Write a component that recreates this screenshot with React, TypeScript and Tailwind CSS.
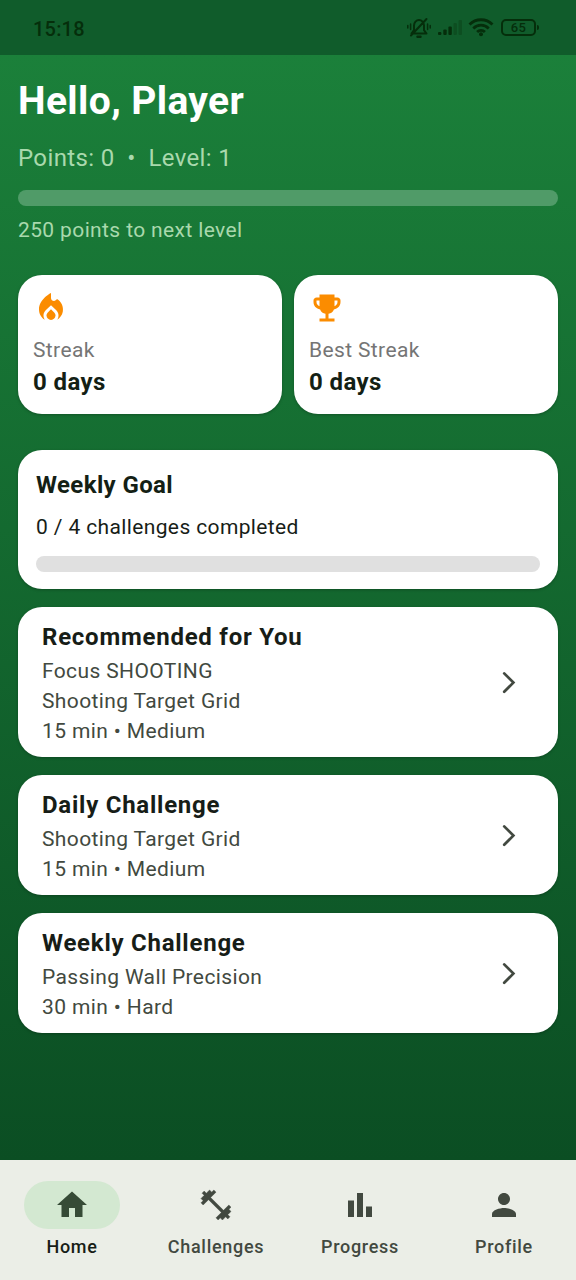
import type { ReactNode } from "react";
import {
  MdBarChart,
  MdEmojiEvents,
  MdHome,
  MdLocalFireDepartment,
  MdPerson,
} from "react-icons/md";

function BellOffIcon() {
  return (
    <svg width="26" height="24" viewBox="0 0 26 24" fill="none" stroke="currentColor" strokeWidth="2" strokeLinecap="round" strokeLinejoin="round">
      <path d="M5.5 17.5h15L18 14.2V9.5a5 5.5 0 0 0-10 0v4.7l-2.5 3.3M5 19.5 20.5 3" />
      <path d="M11.5 20.8h3" strokeWidth="2.4" />
      <path d="M4.6 8v5.5M1.8 9.5v2.5M21.6 8v5.5M24.2 9.5v2.5" strokeWidth="1.5" />
    </svg>
  );
}

function SignalIcon() {
  return (
    <svg width="25" height="17" viewBox="0 0 25 17" fill="currentColor">
      <rect x="0" y="13" width="3.4" height="3" rx="1" />
      <rect x="5.3" y="10.5" width="3.4" height="5.5" rx="1" />
      <rect x="10.4" y="7.5" width="3.4" height="8.5" rx="1" />
      <rect x="15.5" y="4" width="3.4" height="12" rx="1" opacity=".3" />
      <rect x="20.6" y="1" width="3.4" height="15" rx="1" opacity=".3" />
    </svg>
  );
}

function WifiIcon() {
  return (
    <svg width="26" height="19" viewBox="0 0 26 19" fill="none" stroke="currentColor" strokeWidth="2.8">
      <path d="M1.5 6.5a16.3 16.3 0 0 1 23 0M5.3 10.4a10.9 10.9 0 0 1 15.4 0M9.1 14a5.5 5.5 0 0 1 7.8 0" />
      <circle cx="13" cy="16.2" r="2" fill="currentColor" stroke="none" />
    </svg>
  );
}

function DumbbellIcon({ size }: { size: number }) {
  return (
    <svg width={size} height={size} viewBox="0 0 24 24" fill="currentColor" stroke="currentColor" strokeWidth="0.3" strokeLinejoin="round">
      <path d="M20.57 14.86 22 13.43 20.57 12 17 15.57 8.43 7 12 3.43 10.57 2 9.14 3.43 7.71 2 5.57 4.14 4.14 2.71 2.71 4.14l1.43 1.43L2 7.71l1.43 1.43L2 10.57 3.43 12 7 8.43 15.57 17 12 20.57 13.43 22l1.43-1.43L16.29 22l2.14-2.14 1.43 1.43 1.43-1.43-1.43-1.43L22 16.29z" />
    </svg>
  );
}

function StatusBar() {
  return (
    <header className="flex h-[55px] shrink-0 items-center justify-between bg-[#105c2b] pl-[33px] pr-[37px] text-[#052e0b]">
      <span className="pt-[2px] text-[20px] font-medium tracking-[0.2px]">15:18</span>
      <div className="flex items-center">
        <BellOffIcon />
        <span className="ml-[6px]"><SignalIcon /></span>
        <span className="ml-[5px]"><WifiIcon /></span>
        <div className="ml-[7px] flex h-[17px] w-[35px] items-center justify-center rounded-[5px] border-2 border-[#052e0b] text-[13px] font-medium leading-none tracking-[0.3px]">65</div>
        <div className="ml-[1px] h-[5px] w-[2px] rounded-r-full bg-[#052e0b]" />
      </div>
    </header>
  );
}

function StatCard({ icon, label }: { icon: ReactNode; label: string }) {
  return (
    <div className="h-[139px] flex-1 rounded-[24px] bg-white px-[15px] pt-[15px] shadow-[0_1px_3px_rgba(0,0,0,0.25)]">
      <div className="text-[36px] text-[#fb8c00]">{icon}</div>
      <div className="mt-[9px] text-[21px] leading-[30px] tracking-[0.375px] text-[#757575]">{label}</div>
      <div className="mt-[2px] text-[24px] font-bold leading-[30px] tracking-[0.4px] text-[#141f15]">0 days</div>
    </div>
  );
}

function ChallengeCard({ title, lines }: { title: string; lines: string[] }) {
  return (
    <section className="mt-[18px] flex items-center justify-between rounded-[24px] bg-white pb-[11px] pl-[24px] pr-[36px] pt-[13px] shadow-[0_1px_3px_rgba(0,0,0,0.25)]">
      <div>
        <h2 className="mb-[1px] text-[24px] font-bold leading-[35px] tracking-[0.75px] text-[#171d17]">{title}</h2>
        {lines.map((line) => (
          <p key={line} className="text-[21px] leading-[30px] tracking-[0.375px] text-[#424940]">{line}</p>
        ))}
      </div>
      <svg width="26" height="26" viewBox="0 0 26 26" fill="none" stroke="#424940" strokeWidth="2.7">
        <path d="m8.2 3.4 9.2 9.2-9.2 9.2" strokeLinecap="round" />
      </svg>
    </section>
  );
}

const tabs = [
  { label: "Home", Icon: MdHome },
  { label: "Challenges", Icon: DumbbellIcon },
  { label: "Progress", Icon: MdBarChart },
  { label: "Profile", Icon: MdPerson },
];

export default function App() {
  return (
    <div className="flex h-[1280px] w-[576px] flex-col bg-[#ebeee7] font-[Roboto,sans-serif]">
      <StatusBar />
      <main className="flex-1 bg-linear-to-b from-[#1b803a] to-[#0b4e23] px-[18px] pt-[19px]">
        <h1 className="text-[39px] font-bold leading-[54px] tracking-[0.375px] text-white">Hello, Player</h1>
        <p className="mt-[12px] whitespace-pre text-[24px] leading-[36px] tracking-[0.375px] text-[#a9d9ad]">{"Points: 0  •  Level: 1"}</p>
        <div className="mt-[14px] h-[16px] rounded-full bg-[#509b68]" />
        <p className="mt-[9px] text-[21px] leading-[30px] tracking-[0.375px] text-[#a9d9ad]">250 points to next level</p>
        <div className="mt-[30px] flex gap-[12px]">
          <StatCard icon={<MdLocalFireDepartment />} label="Streak" />
          <StatCard icon={<MdEmojiEvents />} label="Best Streak" />
        </div>
        <section className="mt-[36px] h-[139px] rounded-[24px] bg-white px-[18px] pt-[18px] shadow-[0_1px_3px_rgba(0,0,0,0.25)]">
          <h2 className="text-[24px] font-bold leading-[35px] tracking-[0.375px] text-[#141f15]">Weekly Goal</h2>
          <p className="mt-[9px] text-[21px] leading-[30px] tracking-[0.375px] text-[#171d17]">0 / 4 challenges completed</p>
          <div className="mt-[14px] h-[16px] rounded-full bg-[#e0e0e0]" />
        </section>
        <ChallengeCard title="Recommended for You" lines={["Focus SHOOTING", "Shooting Target Grid", "15 min • Medium"]} />
        <ChallengeCard title="Daily Challenge" lines={["Shooting Target Grid", "15 min • Medium"]} />
        <ChallengeCard title="Weekly Challenge" lines={["Passing Wall Precision", "30 min • Hard"]} />
      </main>
      <nav className="grid h-[120px] shrink-0 grid-cols-4 bg-[#ebeee7] pt-[21px]">
        {tabs.map(({ label, Icon }, i) => (
          <div key={label} className={i === 0 ? "flex flex-col items-center text-[#364b36]" : "flex flex-col items-center text-[#424940]"}>
            <div className={i === 0 ? "flex h-[48px] w-[96px] items-center justify-center rounded-full bg-[#d3e8d1]" : "flex h-[48px] w-[96px] items-center justify-center"}>
              <Icon size={36} />
            </div>
            <span className={i === 0 ? "mt-[6px] text-[18px] font-medium leading-[24px] tracking-[0.7px] text-[#171d17]" : "mt-[6px] text-[18px] font-medium leading-[24px] tracking-[0.7px]"}>{label}</span>
          </div>
        ))}
      </nav>
    </div>
  );
}
